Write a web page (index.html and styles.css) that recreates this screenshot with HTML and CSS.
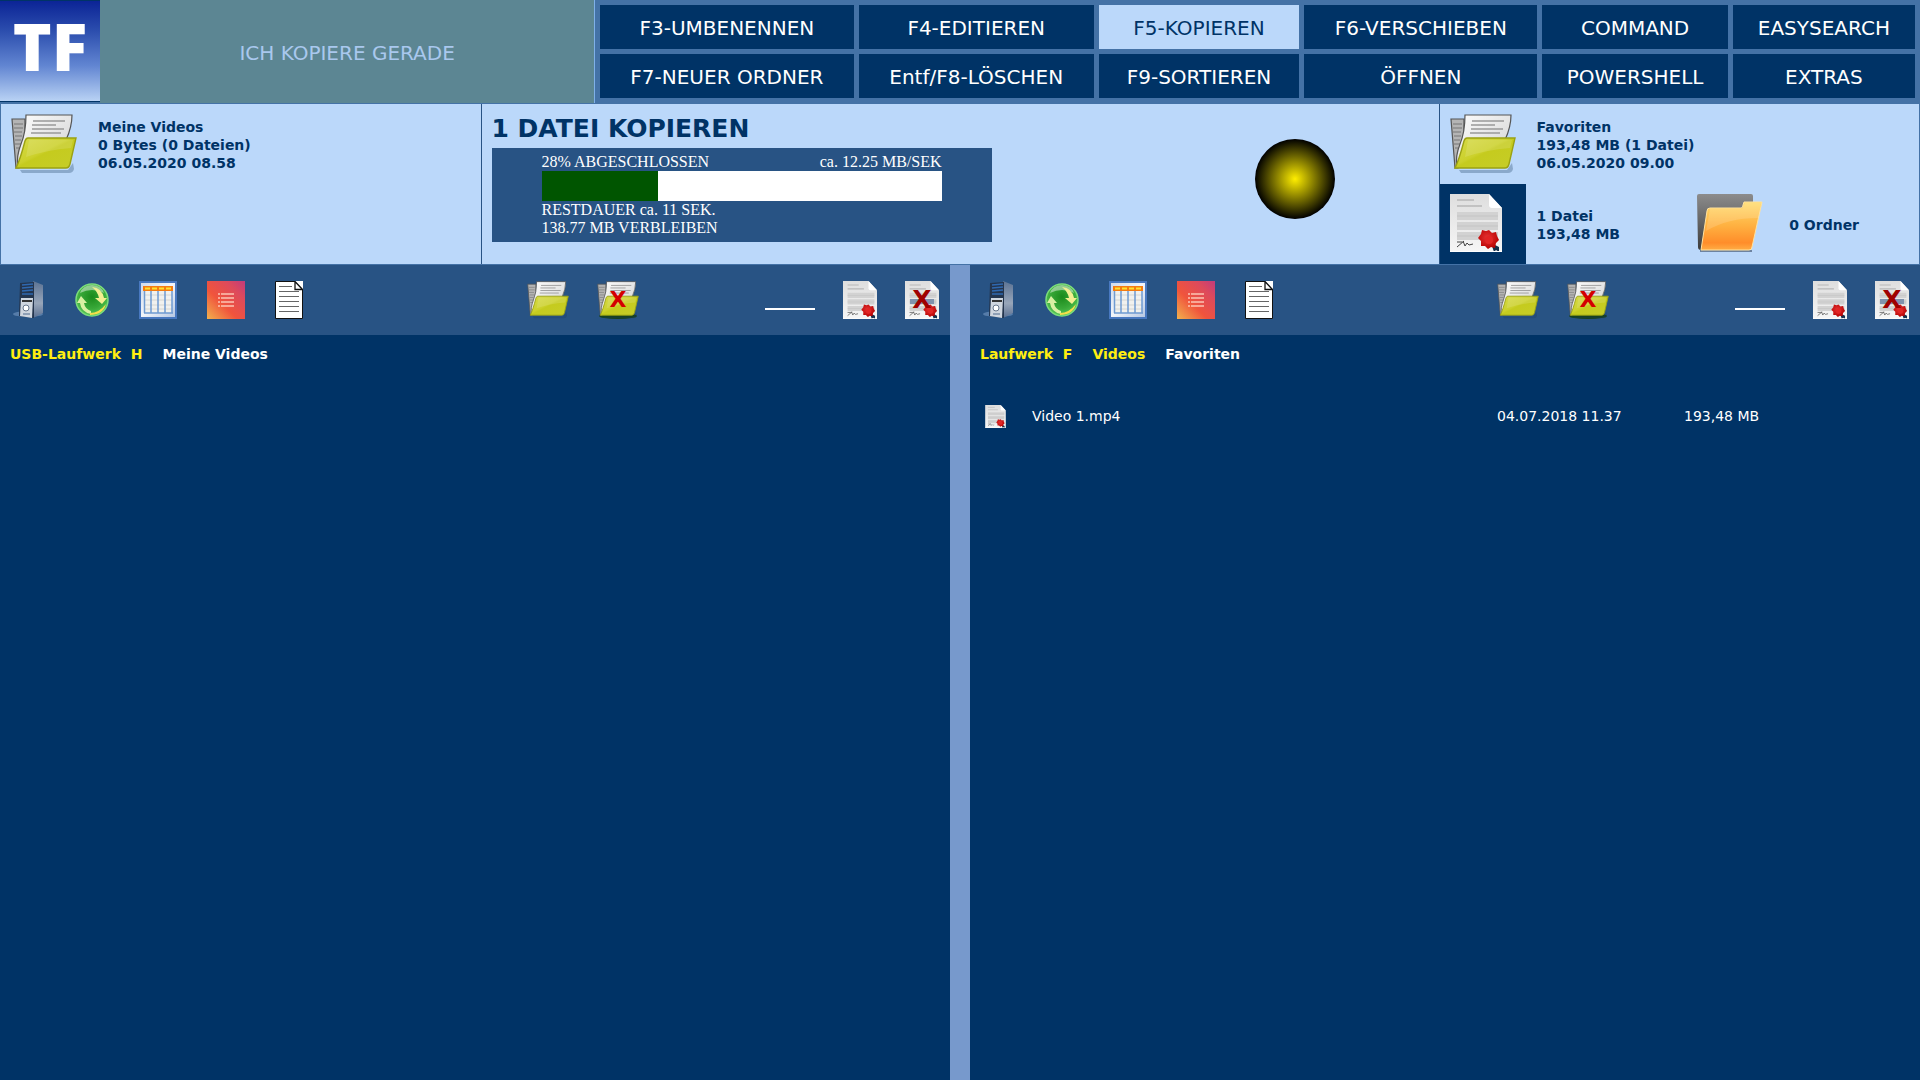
FILE: index.html
```html
<!DOCTYPE html>
<html lang="de">
<head>
    <meta charset="UTF-8">
    <meta name="viewport" content="width=device-width, initial-scale=1.0">
    <title>TF</title>

    <link rel="stylesheet" href="styles.css">
</head>
<body>
    <!-- icons, used by both panes -->
    <svg class="defs" width="0" height="0" aria-hidden="true">
        <defs>
            <linearGradient id="g-lime" x1="0" y1="0" x2="1" y2="1">
                <stop offset="0" stop-color="#d6da4a"/>
                <stop offset="0.45" stop-color="#ccd12c"/>
                <stop offset="0.5" stop-color="#c5cb1e"/>
                <stop offset="1" stop-color="#c6cd28"/>
            </linearGradient>
            <linearGradient id="g-paper" x1="0" y1="0" x2="1" y2="1">
                <stop offset="0" stop-color="#fdfdfd"/>
                <stop offset="1" stop-color="#cfcfcf"/>
            </linearGradient>
            <linearGradient id="g-sheet" x1="0" y1="0" x2="0" y2="1">
                <stop offset="0" stop-color="#dedede"/>
                <stop offset="1" stop-color="#f6f6f6"/>
            </linearGradient>
            <linearGradient id="g-orange" x1="0" y1="0" x2="0" y2="1">
                <stop offset="0" stop-color="#ffdc6c"/>
                <stop offset="0.5" stop-color="#ffb040"/>
                <stop offset="0.85" stop-color="#ff8d2a"/>
                <stop offset="1" stop-color="#ffad45"/>
            </linearGradient>
            <linearGradient id="g-dark" x1="0" y1="0" x2="0" y2="1">
                <stop offset="0" stop-color="#8c8c8c"/>
                <stop offset="1" stop-color="#3c3c3c"/>
            </linearGradient>
            <linearGradient id="g-list" x1="1" y1="0" x2="0" y2="1">
                <stop offset="0" stop-color="#c13b7c"/>
                <stop offset="0.25" stop-color="#dd4a5c"/>
                <stop offset="0.6" stop-color="#f0543c"/>
                <stop offset="1" stop-color="#f2b14e"/>
            </linearGradient>
            <linearGradient id="g-frame" x1="0" y1="0" x2="1" y2="1">
                <stop offset="0" stop-color="#cdd8ea"/>
                <stop offset="0.5" stop-color="#f2f5fa"/>
                <stop offset="1" stop-color="#b4c6e2"/>
            </linearGradient>
            <linearGradient id="g-side" x1="0" y1="0" x2="0" y2="1">
                <stop offset="0" stop-color="#5b7293"/>
                <stop offset="0.6" stop-color="#98a6ba"/>
                <stop offset="1" stop-color="#5b7091"/>
            </linearGradient>
            <radialGradient id="g-green" cx="0.5" cy="0.4" r="0.6">
                <stop offset="0" stop-color="#1b8a1b"/>
                <stop offset="0.6" stop-color="#38a838"/>
                <stop offset="1" stop-color="#58c858"/>
            </radialGradient>
            <radialGradient id="g-seal" cx="0.45" cy="0.4" r="0.6">
                <stop offset="0" stop-color="#e63434"/>
                <stop offset="1" stop-color="#b80000"/>
            </radialGradient>

            <symbol id="folder" viewBox="0 0 66 60">
                <path d="M9 56h48l5-7 1 6q-1 4-5 4H11z" fill="#1a3a60" opacity="0.3"/>
                <path d="M1 5h13v20L8 54H5z" fill="#b4b4b4" stroke="#555" stroke-width="1.2"/>
                <path d="M3 10h9M3 14h9M3 18h8M4 22h7M4 26h6M4 30h6M5 34h4" stroke="#777" stroke-width="1"/>
                <path d="M15 1h46q0 12-6 25L7 52q-2-9 3-22 5-12 5-29z" fill="url(#g-paper)" stroke="#555" stroke-width="1.2"/>
                <path d="M22 7h32M21 11h24M21 15h32M20 19h30" stroke="#999" stroke-width="1.4"/>
                <path d="M17 24h48l-6 26q-1 4-4 4H5q4-8 9-27 1-3 3-3z" fill="url(#g-lime)" stroke="#9ba112" stroke-width="1.4"/>
                <path d="M18 26h44l-2 8q-24 2-45 9z" fill="#fff" opacity="0.13"/>
            </symbol>
            <symbol id="file" viewBox="0 0 52 58">
                <path d="M0 0h39l13 14v44H0z" fill="url(#g-sheet)"/>
                <path d="M39 0v11q0 3 3 3h10z" fill="#fff"/>
                <path d="M7 6h17M7 12h25" stroke="#b8b8b8" stroke-width="1.6"/>
                <path d="M7 18h41v8H7zM7 28h41v8H7zM7 38h41v8H7z" fill="#d2d2d2"/>
                <path d="M7 22h41M7 32h41M7 42h41" stroke="#c4c4c4"/>
                <path d="M7 53l7-6M7 48l5 0M13 47l2 5 2-3 2 2 4-1" fill="none" stroke="#444" stroke-width="1"/>
                <path d="M43 50l6 3v5l-3-2-2 2-2-6z" fill="#14304c"/>
                <path d="M39 36l3 3 4-1 1 4 2 4-3 3-1 5-4-1-3 2-3-3-4 0 0-5-3-3 3-4 1-4 4 1z" fill="url(#g-seal)"/>
                <circle cx="39" cy="46" r="4" fill="#e12525"/>
                <path d="M0 57.500h52" stroke="#fff"/>
            </symbol>
            <symbol id="orange" viewBox="0 0 66 58">
                <path d="M2 0h52q2 0 2 2v22L4 56q-3 0-3-3L0 2q0-2 2-2z" fill="url(#g-dark)"/>
                <path d="M3 57h52" stroke="#6d83a0" stroke-width="2"/>
                <path d="M13 14h31q2 0 2-3l1-3h18l-10 45q0 3-3 3H4l6-39q0-3 3-3z" fill="url(#g-orange)" stroke="#ffe2a0"/>
                <path d="M13 15h32l3-6h16l-3 15q-30 0-52 13z" fill="#fff" opacity="0.15"/>
            </symbol>
            <symbol id="pc" viewBox="0 0 32 38">
                <ellipse cx="15" cy="33" rx="15" ry="3" fill="#8fb0d8" opacity="0.45"/>
                <path d="M20 0l10 4v28l-10 5z" fill="url(#g-side)"/>
                <path d="M7 2l14-1v36L6 35z" fill="#24354e"/>
                <path d="M9 4l11-1M9 7l11-1M9 10l11-1M9 13l11 0" stroke="#2f68b0" stroke-width="1.5"/>
                <path d="M8 17h12l-1 20-12-2z" fill="#cfd6df"/>
                <path d="M9 20h10" stroke="#333" stroke-width="2"/>
                <circle cx="13" cy="27" r="3" fill="#fff" stroke="#66768c" stroke-width="1"/>
                <path d="M10 33h7" stroke="#8fa0b6" stroke-width="2"/>
            </symbol>
            <symbol id="refresh" viewBox="0 0 34 34">
                <circle cx="17" cy="17" r="16" fill="url(#g-green)" stroke="#7bdc7b" stroke-width="1.5"/>
                <path d="M5 10q12-6 24 0-3-8-12-8T5 10z" fill="#fff" opacity="0.45"/>
                <path d="M17 4q10 1 12 11h3l-5 6-7-6h4q-1-6-7-11z" fill="#f4ee90"/>
                <path d="M2 20l4-7 6 7H9q1 6 7 8v3Q6 29 5 20z" fill="#d9f0a2"/>
                <path d="M15 30q9 0 16-9-3 11-16 11z" fill="#f7df4a"/>
            </symbol>
            <symbol id="grid" viewBox="0 0 38 38">
                <path d="M1 1h36v36H1z" fill="url(#g-frame)" stroke="#4878c0" stroke-width="2"/>
                <path d="M5 9h28v23H5z" fill="#f1f1ee"/>
                <path d="M5 14h28M5 19h28M5 24h28M5 28h28" stroke="#d6d6d2"/>
                <path d="M5.500 9v23M12 9v23M19 9v23M26 9v23M33 9v23M5 32h29" stroke="#6f9bd2" stroke-width="1.500"/>
                <path d="M4 5h30v5H4z" fill="#f47c12"/>
                <path d="M6 7.500h5M13 7.500h5M20 7.500h5M27 7.500h5" stroke="#ffe030" stroke-width="2"/>
            </symbol>
            <symbol id="list" viewBox="0 0 38 38">
                <path d="M0 0h38v38H0z" fill="url(#g-list)"/>
                <path d="M14 13h13M14 17h13M14 21h13M14 25h13M11 13h2M11 17h2M11 21h2M11 25h2" stroke="#fbc5b4" stroke-width="1.600"/>
            </symbol>
            <symbol id="text" viewBox="0 0 28 38">
                <path d="M.5.5H20l7.500 8v29H.5z" fill="#fff" stroke="#111"/>
                <path d="M20 0h8v9z" fill="#fff"/>
                <path d="M20 .5v8h7.500z" fill="#fff" stroke="#111" stroke-width="1.300"/>
                <path d="M4 5.500h13M4 10.500h20M4 15.500h20M4 20.500h20M4 25.500h20M4 30.500h20" stroke="#666"/>
            </symbol>
        </defs>
    </svg>

    <header class="header">
        <div class="logo">TF</div>
        <div class="status">ICH KOPIERE GERADE</div>
        <nav class="commands">
            <button class="cmd">F3-UMBENENNEN</button>
            <button class="cmd">F4-EDITIEREN</button>
            <button class="cmd active">F5-KOPIEREN</button>
            <button class="cmd">F6-VERSCHIEBEN</button>
            <button class="cmd">COMMAND</button>
            <button class="cmd">EASYSEARCH</button>
            <button class="cmd">F7-NEUER ORDNER</button>
            <button class="cmd">Entf/F8-LÖSCHEN</button>
            <button class="cmd">F9-SORTIEREN</button>
            <button class="cmd">ÖFFNEN</button>
            <button class="cmd">POWERSHELL</button>
            <button class="cmd">EXTRAS</button>
        </nav>
    </header>

    <section class="info">
        <div class="side">
            <svg class="big"><use href="#folder"/></svg>
            <p class="details wide">Meine Videos<br>0 Bytes (0 Dateien)<br>06.05.2020 08.58</p>
        </div>

        <div class="job">
            <div class="job-text">
                <h1>1 DATEI KOPIEREN</h1>
                <div class="progress">
                    <div class="progress-head">
                        <span>28% ABGESCHLOSSEN</span>
                        <span>ca. 12.25 MB/SEK</span>
                    </div>
                    <div class="bar"><div class="bar-fill" style="width: 29%"></div></div>
                    <div>RESTDAUER ca. 11 SEK.</div>
                    <div>138.77 MB VERBLEIBEN</div>
                </div>
            </div>
            <div class="lamp-box"><div class="lamp"></div></div>
        </div>

        <div class="side">
            <svg class="big"><use href="#folder"/></svg>
            <p class="details wide">Favoriten<br>193,48 MB (1 Datei)<br>06.05.2020 09.00</p>
            <button class="selected" aria-label="Dateien"><svg class="big-file"><use href="#file"/></svg></button>
            <p class="details">1 Datei<br>193,48 MB</p>
            <svg class="big-orange"><use href="#orange"/></svg>
            <p class="details">0 Ordner</p>
        </div>
    </section>

    <main class="panes">
        <section class="pane">
            <div class="toolbar">
                <div class="tools">
                    <button class="tool" aria-label="Computer"><svg width="32" height="38"><use href="#pc"/></svg></button>
                    <button class="tool" aria-label="Aktualisieren"><svg width="34" height="34"><use href="#refresh"/></svg></button>
                    <button class="tool" aria-label="Tabelle"><svg width="38" height="38"><use href="#grid"/></svg></button>
                    <button class="tool" aria-label="Liste"><svg width="38" height="38"><use href="#list"/></svg></button>
                    <button class="tool" aria-label="Text"><svg width="28" height="38"><use href="#text"/></svg></button>
                </div>
                <div class="select-tools">
                    <div class="tools">
                        <button class="tool" aria-label="Ordner"><svg width="42" height="38"><use href="#folder"/></svg></button>
                        <button class="tool" aria-label="Ordner abwählen"><svg width="42" height="38"><ellipse cx="21" cy="35" rx="19" ry="3" fill="#16421c"/><use href="#folder"/><text class="x" x="21" y="26">X</text></svg></button>
                    </div>
                    <div class="tools">
                        <input class="filter" type="text" aria-label="Filter">
                        <button class="tool" aria-label="Dateien"><svg width="34" height="38"><use href="#file"/></svg></button>
                        <button class="tool" aria-label="Dateien abwählen"><svg width="34" height="38"><use href="#file"/><path d="M5 18h24v5H5z" fill="#8093ae"/><text class="x dark" x="17" y="27">X</text></svg></button>
                    </div>
                </div>
            </div>
            <nav class="path">
                <a href="#">USB-Laufwerk&nbsp; H</a>
                <a href="#" class="current">Meine Videos</a>
            </nav>
        </section>

        <section class="pane">
            <div class="toolbar">
                <div class="tools">
                    <button class="tool" aria-label="Computer"><svg width="32" height="38"><use href="#pc"/></svg></button>
                    <button class="tool" aria-label="Aktualisieren"><svg width="34" height="34"><use href="#refresh"/></svg></button>
                    <button class="tool" aria-label="Tabelle"><svg width="38" height="38"><use href="#grid"/></svg></button>
                    <button class="tool" aria-label="Liste"><svg width="38" height="38"><use href="#list"/></svg></button>
                    <button class="tool" aria-label="Text"><svg width="28" height="38"><use href="#text"/></svg></button>
                </div>
                <div class="select-tools">
                    <div class="tools">
                        <button class="tool" aria-label="Ordner"><svg width="42" height="38"><use href="#folder"/></svg></button>
                        <button class="tool" aria-label="Ordner abwählen"><svg width="42" height="38"><ellipse cx="21" cy="35" rx="19" ry="3" fill="#16421c"/><use href="#folder"/><text class="x" x="21" y="26">X</text></svg></button>
                    </div>
                    <div class="tools">
                        <input class="filter" type="text" aria-label="Filter">
                        <button class="tool" aria-label="Dateien"><svg width="34" height="38"><use href="#file"/></svg></button>
                        <button class="tool" aria-label="Dateien abwählen"><svg width="34" height="38"><use href="#file"/><path d="M5 18h24v5H5z" fill="#8093ae"/><text class="x dark" x="17" y="27">X</text></svg></button>
                    </div>
                </div>
            </div>
            <nav class="path">
                <a href="#">Laufwerk&nbsp; F</a>
                <a href="#">Videos</a>
                <a href="#" class="current">Favoriten</a>
            </nav>
            <table class="files">
                <tr>
                    <td class="col-icon"><svg width="21" height="23"><use href="#file"/></svg></td>
                    <td class="col-name">Video 1.mp4</td>
                    <td class="col-date">04.07.2018 11.37</td>
                    <td class="col-size">193,48 MB</td>
                </tr>
            </table>
        </section>
    </main>
</body>
</html>
```
FILE: styles.css
```css
*{
    box-sizing: border-box;
}
body{
    margin: 0;
    min-height: 100vh;
    display: flex;
    flex-direction: column;
    font-family: Verdana, "DejaVu Sans", sans-serif;
    font-size: 14px;
    background-color: #003366;
}
button{
    font-family: inherit;
    border: none;
    padding: 0;
    cursor: pointer;
}
svg{
    display: block;
}
.defs{
    position: absolute;
}

/* header */
.header{
    display: flex;
    background-color: #4472a6;
}
.logo{
    width: 100px;
    border-top: 1px solid #003366;
    border-bottom: 1px solid #003366;
    margin-bottom: 1px;
    background: linear-gradient(#0b2496, #2c4eae 30%, #6286d2 65%, #b9d2f4);
    color: white;
    font-family: "Open Sans", sans-serif;
    font-size: 66px;
    font-weight: 800;
    line-height: 88px;
    text-align: center;
}
.status{
    flex: 1;
    display: flex;
    align-items: center;
    justify-content: center;
    padding-top: 2px;
    border-right: 1px solid #7fb0e8;
    background-color: #5c8693;
    color: #a9c8ee;
    font-size: 20px;
}
.commands{
    width: 69%;
    display: grid;
    grid-template-columns: 253fr 235fr 200fr 233fr 185fr 182fr;
    gap: 5px;
    padding: 5px;
}
.cmd{
    height: 44px;
    padding-top: 1px;
    background-color: #003366;
    color: white;
    font-size: 20px;
}
.cmd.active{
    background-color: #bbd8fa;
    color: #003366;
}

/* info row */
.info{
    display: grid;
    grid-template-columns: 1fr 2fr 1fr;
    border: 1px solid #4472a6;
    background-color: #bbd8fa;
    color: #003366;
}
.side{
    display: grid;
    grid-template-columns: 86px 172fr 81px 141fr;
    grid-template-rows: 80px 80px;
}
.details{
    margin: 0;
    padding: 2px 0 0 11px;
    align-self: center;
    font-weight: bold;
    line-height: 18px;
}
.wide{
    grid-column: span 3;
}
.big{
    width: 66px;
    height: 60px;
    margin: 10px;
}
.selected{
    background-color: #003366;
    padding: 0 0 2px 10px;
}
.big-file{
    width: 52px;
    height: 58px;
}
.big-orange{
    width: 66px;
    height: 58px;
    margin: 10px 0;
}
.job{
    display: flex;
    border-left: 1px solid #285384;
    border-right: 1px solid #285384;
    padding-left: 10px;
}
.job h1{
    margin: 10px 0 4px;
    font-size: 25px;
    line-height: 30px;
}
.progress{
    width: 500px;
    padding: 5px 50px;
    background-color: #285384;
    color: white;
    font-family: "Times New Roman", "Liberation Serif", serif;
    font-size: 16px;
    line-height: 18px;
}
.progress-head{
    display: flex;
    justify-content: space-between;
}
.bar{
    height: 30px;
    background-color: white;
}
.bar-fill{
    height: 100%;
    background-color: #005500;
}
.lamp-box{
    flex: 1;
    display: flex;
    align-items: center;
    justify-content: center;
    padding: 0 0 10px 160px;
}
.lamp{
    width: 80px;
    height: 80px;
    border-radius: 50%;
    background: radial-gradient(closest-side, #ffee00, #000);
}

/* panes */
.panes{
    flex: 1;
    display: grid;
    grid-template-columns: 1fr 1fr;
    gap: 20px;
    background-color: #7799cc;
}
.pane{
    background-color: #003366;
}
.toolbar{
    height: 70px;
    display: grid;
    grid-template-columns: 514fr 412fr;
    align-items: center;
    padding: 0 11px 0 13px;
    background-color: #285384;
}
.tools{
    display: flex;
    align-items: center;
    gap: 30px;
}
.select-tools{
    display: flex;
    justify-content: space-between;
}
.select-tools .tools{
    gap: 28px;
}
.tool{
    background: none;
}
.filter{
    width: 50px;
    height: 20px;
    padding: 0;
    border: none;
    border-bottom: 2px solid white;
    background: none;
    color: white;
}
.x{
    fill: #d40000;
    font-size: 22px;
    font-weight: bold;
    text-anchor: middle;
}
.dark{
    fill: #a00000;
    font-size: 25px;
}
.path{
    display: flex;
    gap: 20px;
    padding: 10px;
    line-height: 18px;
    font-weight: bold;
}
.path a{
    color: #ffee11;
    text-decoration: none;
}
.path a.current{
    color: white;
}
.files{
    width: 100%;
    margin-top: 26px;
    border-collapse: collapse;
    table-layout: fixed;
    color: white;
}
.files td{
    height: 34px;
    padding: 0;
}
.files .col-icon{
    width: 62px;
    padding-left: 15px;
}
.col-date{
    width: 187px;
}
.col-size{
    width: 236px;
}
```
